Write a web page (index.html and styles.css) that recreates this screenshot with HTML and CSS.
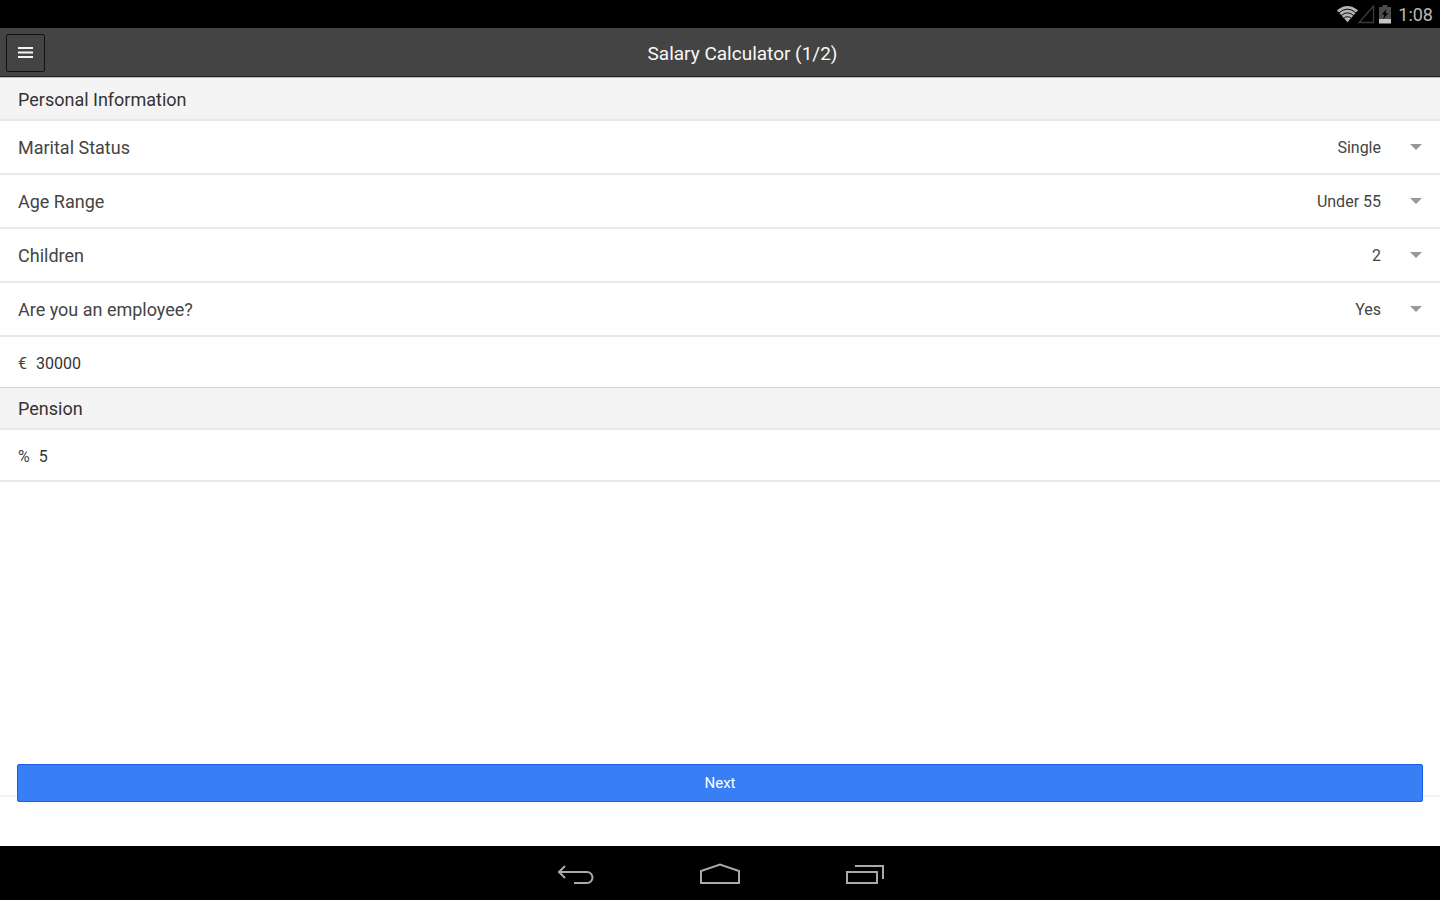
FILE: index.html
```html
<!DOCTYPE html>
<html lang="en">
<head>
    <meta charset="UTF-8">
    <meta name="viewport" content="width=device-width, initial-scale=1.0">
    <title>Salary Calculator</title>
    <link rel="stylesheet" href="styles.css">
</head>
<body>
    <div class="status-bar">
        <svg class="wifi" width="21" height="18" viewBox="0 0 22 18">
            <path d="M0 5.2 Q11 -4.2 22 5.2 L11 17.6 Z" fill="#b4b4b4"/>
            <path d="M1.8 8 Q11 -0.2 20.2 8 M4.2 10.8 Q11 4.8 17.8 10.8 M6.8 13.6 Q11 10 15.2 13.6" fill="none" stroke="#000" stroke-width="1"/>
        </svg>
        <svg class="signal" width="17" height="20" viewBox="0 0 17 20">
            <path d="M1 18.5 L15.5 18.5 L15.5 2 Z" fill="none" stroke="#3c3c3c" stroke-width="1.3"/>
        </svg>
        <svg class="battery" width="12" height="19" viewBox="0 0 12 19">
            <path d="M3.5 0 H8.5 V2 H12 V14 H0 V2 H3.5 Z" fill="#4c4c4c"/>
            <path d="M0 14 H12 V18.5 H0 Z" fill="#c4c4c4"/>
            <path d="M7.5 4 L2.8 9.5 H5.4 L4.2 14 L9.3 8.3 H6.5 Z" fill="#000"/>
        </svg>
        <span class="clock">1:08</span>
    </div>

    <header class="header">
        <button type="button" class="menu-button" aria-label="Menu">
            <svg width="15" height="12" viewBox="0 0 15 12">
                <path d="M0 1 H15 M0 5.5 H15 M0 10 H15" stroke="#f4f4f4" stroke-width="2"/>
            </svg>
        </button>
        <h1>Salary Calculator (1/2)</h1>
    </header>

    <form class="form">
        <div class="list">
            <h2 class="divider">Personal Information</h2>
            <div class="item">
                <label for="maritalStatus">Marital Status</label>
                <select id="maritalStatus" name="maritalStatus">
                    <option selected>Single</option>
                    <option>Married</option>
                </select>
            </div>
            <div class="item">
                <label for="ageRange">Age Range</label>
                <select id="ageRange" name="ageRange">
                    <option selected>Under 55</option>
                    <option>Over 55</option>
                </select>
            </div>
            <div class="item">
                <label for="children">Children</label>
                <select id="children" name="children">
                    <option>0</option>
                    <option>1</option>
                    <option selected>2</option>
                    <option>3</option>
                </select>
            </div>
            <div class="item">
                <label for="employee">Are you an employee?</label>
                <select id="employee" name="employee">
                    <option selected>Yes</option>
                    <option>No</option>
                </select>
            </div>
            <div class="item item-input item-last">
                <label for="salary">€</label>
                <input type="text" id="salary" name="salary" value="30000">
            </div>
            <h2 class="divider">Pension</h2>
            <div class="item item-input">
                <label for="pension">%</label>
                <input type="text" id="pension" name="pension" value="5">
            </div>
        </div>

        <div class="footer">
            <button type="submit" class="next-button">Next</button>
        </div>
    </form>

    <nav class="nav-bar">
        <button type="button" aria-label="Back">
            <svg width="40" height="24" viewBox="0 0 40 24">
                <path d="M9 4 L3 10 L9 16 M3 10 H31 A5.5 5.5 0 0 1 31 21 H18" fill="none" stroke="#aaa" stroke-width="2"/>
            </svg>
        </button>
        <button type="button" aria-label="Home">
            <svg width="40" height="24" viewBox="0 0 40 24">
                <path d="M1 21 V9 L20 2.5 L39 9 V21 Z" fill="none" stroke="#aaa" stroke-width="2"/>
            </svg>
        </button>
        <button type="button" aria-label="Recent apps">
            <svg width="40" height="24" viewBox="0 0 40 24">
                <path d="M3 10 H33 V21 H3 Z M11 4 H39 V17" fill="none" stroke="#aaa" stroke-width="2"/>
            </svg>
        </button>
    </nav>
</body>
</html>
```
FILE: styles.css
```css
* {
    box-sizing: border-box;
}

body {
    font-family: Roboto, "Noto Sans", sans-serif;
    margin: 0;
    min-height: 100vh;
    display: flex;
    flex-direction: column;
    background-color: #fff;
    color: #333;
}

button, input, select {
    font-family: inherit;
    margin: 0;
}

.status-bar {
    height: 28px;
    padding-right: 7px;
    display: flex;
    align-items: center;
    justify-content: flex-end;
    background-color: #000;
}

.battery {
    margin: 0 7px 0 4px;
}

.clock {
    font-size: 18px;
    color: #b8b8b8;
}

.header {
    height: 49px;
    padding: 2px 0 0 6px;
    display: flex;
    align-items: center;
    background-color: #444;
    border-bottom: 1px solid #222;
}

.header h1 {
    flex: 1;
    margin: 0;
    font-size: 19px;
    font-weight: 400;
    text-align: center;
    color: #f8f8f8;
}

.menu-button {
    width: 39px;
    height: 38px;
    padding: 0;
    display: flex;
    align-items: center;
    justify-content: center;
    background-color: #444;
    border: 1px solid #111;
    border-radius: 2px;
}

.form {
    flex: 1;
    display: flex;
    flex-direction: column;
}

.list {
    flex: 1;
    border-top: 1px solid #bbb;
}

.divider {
    height: 43px;
    margin: 0;
    padding: 0 18px;
    font-size: 18px;
    font-weight: 400;
    line-height: 42px;
    background-color: #f4f4f4;
    border-top: 1px solid #d2d2d2;
    border-bottom: 2px solid #e8e8e8;
}

.divider:first-child {
    border-top-color: #f4f4f4;
}

.item {
    position: relative;
    height: 54px;
    padding-left: 18px;
    display: flex;
    align-items: center;
    font-size: 18px;
    color: #444;
    border-bottom: 2px solid #e8e8e8;
}

.item select {
    flex: 1;
    height: 52px;
    padding: 0 59px 0 0;
    appearance: none;
    background: none;
    border: none;
    font-size: 16px;
    color: #444;
    text-align: right;
    text-align-last: right;
}

/* drop-down arrow */
.item::after {
    content: "";
    position: absolute;
    top: 23px;
    right: 18px;
    border: 6px solid transparent;
    border-top-color: #999;
    border-bottom: none;
}

.item-input {
    height: 52px;
    padding-top: 2px;
    font-size: 16px;
}

.item-input::after {
    display: none;
}

.item-input input {
    flex: 1;
    height: 48px;
    padding: 0 9px;
    background: none;
    border: none;
    font-size: 16px;
    color: #333;
}

.item-last {
    height: 50px;
    border-bottom: none;
}

.footer {
    height: 51px;
    padding: 0 17px;
    border-top: 2px solid #f2f2f2;
}

.next-button {
    display: block;
    width: 100%;
    height: 38px;
    margin-top: -33px;
    background-color: #387ef5;
    border: 1px solid #1f5fe8;
    border-radius: 2px;
    font-size: 15px;
    color: #fff;
}

.nav-bar {
    height: 54px;
    padding-top: 2px;
    display: flex;
    justify-content: center;
    align-items: center;
    gap: 104px;
    background-color: #000;
}

.nav-bar button {
    padding: 0;
    display: flex;
    background: none;
    border: none;
}
```
